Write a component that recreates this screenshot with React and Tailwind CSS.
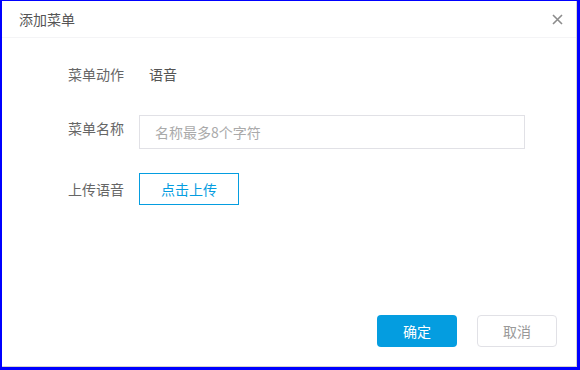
export default function App() {
  const font = { fontFamily: '"Noto Sans CJK SC", "Noto Sans", sans-serif' };
  return (
    <div className="w-[580px] h-[370px] bg-[#0000ff] pl-[2px] pt-[1px] pr-[3px] pb-[3px]" style={font}>
      <div className="w-full h-full bg-white border-r border-b border-[#d6d3ce] flex flex-col">
        <div className="h-[37px] flex items-center justify-between pl-[17px] pr-[13px] border-b border-[#f4f4f6]">
          <span className="text-[14px] text-[#555]">添加菜单</span>
          <svg width="11" height="11" viewBox="0 0 11 11" className="mt-[1px]">
            <path d="M1 1L10 10M10 1L1 10" stroke="#8c8c8c" strokeWidth="1.6" />
          </svg>
        </div>
        <div className="flex-1 flex flex-col pl-[66px] pt-[26px]">
          <div className="flex items-center h-[20px] text-[14px] text-[#666]">
            <span className="w-[56px]">菜单动作</span>
            <span className="ml-[25px] text-[#555]">语音</span>
          </div>
          <div className="flex items-start mt-[31px]">
            <span className="w-[56px] text-[14px] text-[#666] pt-[3px] leading-[20px]">菜单名称</span>
            <input
              className="ml-[15px] w-[386px] h-[34px] border border-[#e1e1e6] px-[15px] text-[14px] text-[#555] placeholder:text-[#aaa] outline-none"
              placeholder="名称最多8个字符"
              style={font}
            />
          </div>
          <div className="flex items-center mt-[24px]">
            <span className="w-[56px] text-[14px] text-[#666]">上传语音</span>
            <button className="ml-[15px] w-[100px] h-[32px] border border-[#049de0] text-[#049de0] text-[14px] bg-white" style={font}>
              点击上传
            </button>
          </div>
        </div>
        <div className="flex justify-end gap-[20px] pr-[19px] pb-[19px]">
          <button className="w-[80px] h-[32px] rounded-[4px] bg-[#049de0] text-white text-[14px]" style={font}>确定</button>
          <button className="w-[80px] h-[32px] rounded-[4px] border border-[#e1e1e6] bg-white text-[#999] text-[14px]" style={font}>取消</button>
        </div>
      </div>
    </div>
  );
}
